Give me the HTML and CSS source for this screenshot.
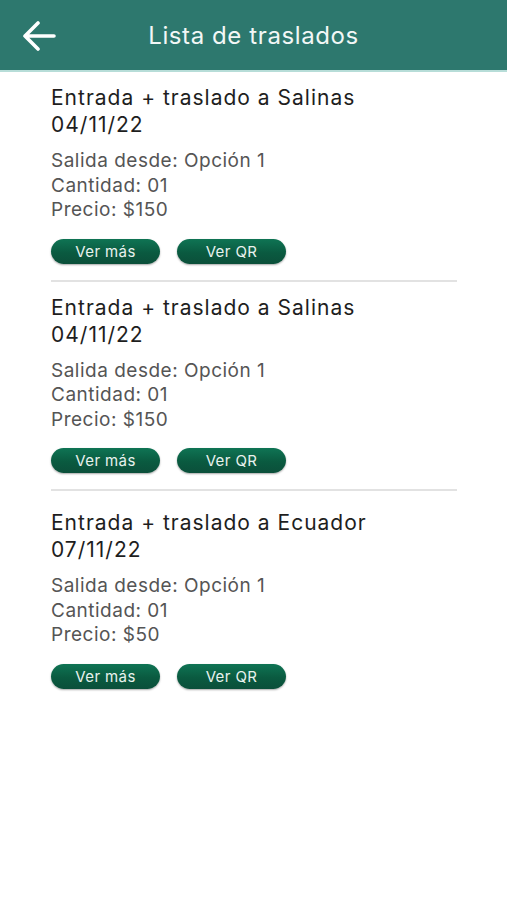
FILE: index.html
```html
<!DOCTYPE html>
<html lang="es">
<head>
    <meta charset="UTF-8">
    <meta name="viewport" content="width=device-width, initial-scale=1.0">
    <title>Lista de traslados</title>
    <link rel="stylesheet" href="styles.css">
</head>
<body>

<div class="topbar">
    <button class="back-btn" aria-label="Volver">
        <svg width="34" height="30" viewBox="0 0 34 30">
            <path d="M32 15 H3 M16 2 L3 15 L16 28" fill="none" stroke="#fff" stroke-width="3.6" stroke-linecap="round" stroke-linejoin="round"/>
        </svg>
    </button>
    <h1>Lista de traslados</h1>
</div>

<div class="list">
    <div class="item">
        <h2>Entrada + traslado a Salinas<br>04/11/22</h2>
        <p class="details">Salida desde: Opción 1<br>Cantidad: 01<br>Precio: $150</p>
        <div class="actions">
            <button class="pill">Ver más</button>
            <button class="pill">Ver QR</button>
        </div>
    </div>

    <div class="item">
        <h2>Entrada + traslado a Salinas<br>04/11/22</h2>
        <p class="details">Salida desde: Opción 1<br>Cantidad: 01<br>Precio: $150</p>
        <div class="actions">
            <button class="pill">Ver más</button>
            <button class="pill">Ver QR</button>
        </div>
    </div>

    <div class="item last">
        <h2>Entrada + traslado a Ecuador<br>07/11/22</h2>
        <p class="details">Salida desde: Opción 1<br>Cantidad: 01<br>Precio: $50</p>
        <div class="actions">
            <button class="pill">Ver más</button>
            <button class="pill">Ver QR</button>
        </div>
    </div>
</div>

</body>
</html>
```

FILE: styles.css
```css
body {
    margin: 0;
    font-family: Inter, "Open Sans", sans-serif;
    background: #fff;
    color: #222;
}
.topbar {
    height: 70px;
    background: #2d786e;
    border-bottom: 2px solid #b7ddd8;
    display: flex;
    align-items: center;
}
.back-btn {
    background: none;
    border: none;
    padding: 0;
    margin-left: 22px;
    margin-top: 2px;
    display: flex;
    cursor: pointer;
}
.topbar h1 {
    flex: 1;
    margin: 0 0 0 -56px;
    text-align: center;
    font-size: 24px;
    font-weight: 400;
    color: #f2f7f6;
    letter-spacing: 0.6px;
}
.list {
    padding: 12px 50px 0 51px;
}
.item {
    padding-bottom: 16px;
    margin-bottom: 12px;
    border-bottom: 2px solid #e2e2e2;
}
.item:nth-child(2) {
    margin-bottom: 18px;
}
.item.last {
    border-bottom: none;
}
.item h2 {
    margin: 0;
    font-size: 21px;
    line-height: 27px;
    font-weight: 400;
    letter-spacing: 1px;
    color: #1e1e1e;
}
.details {
    margin: 11px 0 0;
    font-size: 19px;
    line-height: 24.5px;
    letter-spacing: 0.5px;
    color: #555;
}
.actions {
    display: flex;
    gap: 17px;
    margin-top: 16px;
}
.pill {
    width: 109px;
    height: 25px;
    border: none;
    border-radius: 13px;
    background: linear-gradient(#0f7454, #0a5a40 55%, #0b4f3a);
    box-shadow: 0 1px 2px rgba(0, 0, 0, 0.35);
    color: #e8f2ee;
    font-family: inherit;
    font-size: 15px;
    letter-spacing: 0.4px;
    padding: 0;
    cursor: pointer;
}
```
